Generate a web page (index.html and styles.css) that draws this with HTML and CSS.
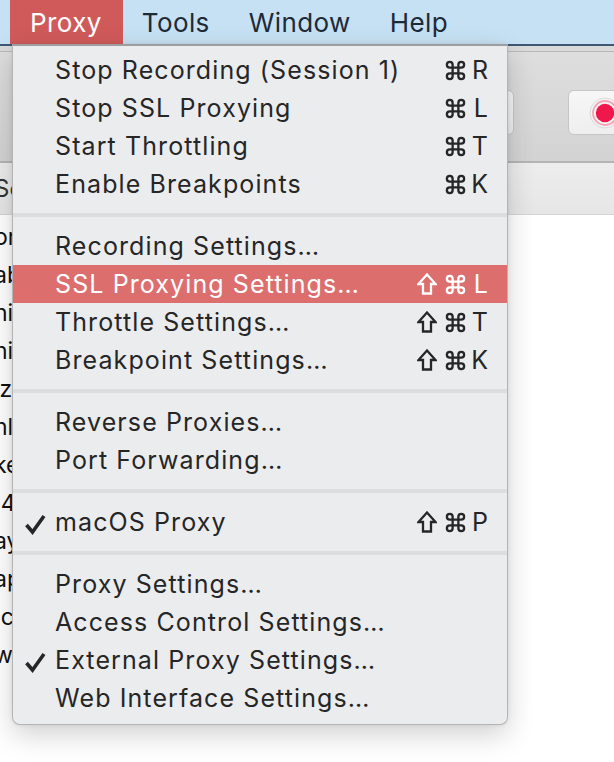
FILE: index.html
```html
<!DOCTYPE html>
<html>
<head>
<meta charset="utf-8">
<link rel="stylesheet" href="styles.css">
</head>
<body>
<div class="screen">
  <div class="menubar">
    <span class="mb-item active">Proxy</span>
    <span class="mb-item">Tools</span>
    <span class="mb-item">Window</span>
    <span class="mb-item">Help</span>
  </div>
  <div class="window">
    <div class="titlebar"></div>
    <div class="toolbar">
      <div class="tb-btn tb-left"></div>
      <div class="tb-btn tb-record">
        <svg width="32" height="32" viewBox="0 0 32 32">
          <circle cx="16" cy="16" r="15" fill="#f4f4f6" stroke="#d9d9de" stroke-width="1"/>
          <circle cx="16" cy="16" r="12" fill="none" stroke="#f7a3b3" stroke-width="1.8"/>
          <circle cx="16" cy="16" r="9.2" fill="#f0174a"/>
        </svg>
      </div>
    </div>
    <div class="header"><span class="frag">Se</span></div>
    <div class="list">
      <div class="row">or</div>
      <div class="row">ab</div>
      <div class="row">ni</div>
      <div class="row">ni</div>
      <div class="row">iz</div>
      <div class="row">nl</div>
      <div class="row">ke</div>
      <div class="row">.4</div>
      <div class="row">ay</div>
      <div class="row">ap</div>
      <div class="row">.c</div>
      <div class="row">wa</div>
    </div>
  </div>

  <div class="menu">
    <div class="item"><span class="label">Stop Recording (Session 1)</span><span class="sc"><span class="cmd"><svg viewBox="0 0 24 24"><path d="M15 6v12a3 3 0 1 0 3-3H6a3 3 0 1 0 3 3V6a3 3 0 1 0-3 3h12a3 3 0 1 0-3-3"/></svg></span><span class="key">R</span></span></div>
    <div class="item"><span class="label">Stop SSL Proxying</span><span class="sc"><span class="cmd"><svg viewBox="0 0 24 24"><path d="M15 6v12a3 3 0 1 0 3-3H6a3 3 0 1 0 3 3V6a3 3 0 1 0-3 3h12a3 3 0 1 0-3-3"/></svg></span><span class="key">L</span></span></div>
    <div class="item"><span class="label">Start Throttling</span><span class="sc"><span class="cmd"><svg viewBox="0 0 24 24"><path d="M15 6v12a3 3 0 1 0 3-3H6a3 3 0 1 0 3 3V6a3 3 0 1 0-3 3h12a3 3 0 1 0-3-3"/></svg></span><span class="key">T</span></span></div>
    <div class="item"><span class="label">Enable Breakpoints</span><span class="sc"><span class="cmd"><svg viewBox="0 0 24 24"><path d="M15 6v12a3 3 0 1 0 3-3H6a3 3 0 1 0 3 3V6a3 3 0 1 0-3 3h12a3 3 0 1 0-3-3"/></svg></span><span class="key">K</span></span></div>
    <div class="sep"></div>
    <div class="item"><span class="label">Recording Settings…</span></div>
    <div class="item selected"><span class="label">SSL Proxying Settings…</span><span class="sc"><span class="shift"><svg viewBox="0 0 20 22"><path d="M10 1.5 L1.5 11 H6 V20.5 H14 V11 H18.5 Z"/></svg></span><span class="cmd"><svg viewBox="0 0 24 24"><path d="M15 6v12a3 3 0 1 0 3-3H6a3 3 0 1 0 3 3V6a3 3 0 1 0-3 3h12a3 3 0 1 0-3-3"/></svg></span><span class="key">L</span></span></div>
    <div class="item"><span class="label">Throttle Settings…</span><span class="sc"><span class="shift"><svg viewBox="0 0 20 22"><path d="M10 1.5 L1.5 11 H6 V20.5 H14 V11 H18.5 Z"/></svg></span><span class="cmd"><svg viewBox="0 0 24 24"><path d="M15 6v12a3 3 0 1 0 3-3H6a3 3 0 1 0 3 3V6a3 3 0 1 0-3 3h12a3 3 0 1 0-3-3"/></svg></span><span class="key">T</span></span></div>
    <div class="item"><span class="label">Breakpoint Settings…</span><span class="sc"><span class="shift"><svg viewBox="0 0 20 22"><path d="M10 1.5 L1.5 11 H6 V20.5 H14 V11 H18.5 Z"/></svg></span><span class="cmd"><svg viewBox="0 0 24 24"><path d="M15 6v12a3 3 0 1 0 3-3H6a3 3 0 1 0 3 3V6a3 3 0 1 0-3 3h12a3 3 0 1 0-3-3"/></svg></span><span class="key">K</span></span></div>
    <div class="sep"></div>
    <div class="item"><span class="label">Reverse Proxies…</span></div>
    <div class="item"><span class="label">Port Forwarding…</span></div>
    <div class="sep"></div>
    <div class="item"><span class="check"><svg viewBox="0 0 22 22"><path d="M2.5 12 L8.5 19 L20 3"/></svg></span><span class="label">macOS Proxy</span><span class="sc"><span class="shift"><svg viewBox="0 0 20 22"><path d="M10 1.5 L1.5 11 H6 V20.5 H14 V11 H18.5 Z"/></svg></span><span class="cmd"><svg viewBox="0 0 24 24"><path d="M15 6v12a3 3 0 1 0 3-3H6a3 3 0 1 0 3 3V6a3 3 0 1 0-3 3h12a3 3 0 1 0-3-3"/></svg></span><span class="key">P</span></span></div>
    <div class="sep"></div>
    <div class="item"><span class="label">Proxy Settings…</span></div>
    <div class="item"><span class="label">Access Control Settings…</span></div>
    <div class="item"><span class="check"><svg viewBox="0 0 22 22"><path d="M2.5 12 L8.5 19 L20 3"/></svg></span><span class="label">External Proxy Settings…</span></div>
    <div class="item"><span class="label">Web Interface Settings…</span></div>
  </div>
</div>
</body>
</html>
```

FILE: styles.css
```css
* { box-sizing: border-box; }
html, body { margin: 0; padding: 0; }
body {
  width: 614px;
  height: 762px;
  overflow: hidden;
  background: #ffffff;
  font-family: "Inter", "Roboto", "Liberation Sans", sans-serif;
}
.screen {
  position: relative;
  width: 614px;
  height: 762px;
  overflow: hidden;
}

/* menubar */
.menubar {
  height: 44px;
  background: #c6e1f3;
  display: flex;
  align-items: stretch;
  padding-left: 10px;
}
.mb-item {
  display: flex;
  align-items: center;
  padding: 0 21px 0 20px;
  font-size: 26px;
  color: #1e2a36;
  letter-spacing: 0.4px;
  flex-shrink: 0;
}
.mb-item + .mb-item {
  padding: 0 20px 0 19px;
}
.mb-item.active {
  background: #d05a5a;
  color: #ffffff;
}

/* background window */
.window {
  border-top: 2px solid #3d5873;
}
.titlebar {
  height: 6px;
  background: #dadada;
  border-bottom: 1px solid #b9b9b9;
}
.toolbar {
  height: 111px;
  background: linear-gradient(#dedede, #d3d3d3);
  border-bottom: 2px solid #b5b5b5;
  display: flex;
  align-items: center;
  padding-top: 12px;
}
.tb-btn {
  height: 45px;
  flex-shrink: 0;
  background: linear-gradient(#f7f7f7, #eeeeee);
  border: 1px solid #c6c6c6;
  border-radius: 6px;
}
.tb-left {
  width: 40px;
  margin-left: 474px;
}
.tb-record {
  width: 70px;
  margin-left: 54px;
  display: flex;
  align-items: center;
  padding-left: 20px;
}
.tb-record svg { width: 32px; height: 32px; }
.header {
  height: 52px;
  background: linear-gradient(#ededed, #e6e6e6);
  border-bottom: 1px solid #d6d6d6;
  display: flex;
  align-items: center;
  overflow: hidden;
}
.frag {
  font-size: 24px;
  color: #333;
  margin-left: -6px;
  white-space: nowrap;
}
.list {
  padding-top: 3px;
  overflow: hidden;
}
.row {
  height: 38px;
  line-height: 38px;
  font-size: 23px;
  color: #111;
  white-space: nowrap;
  margin-left: -6px;
}

/* dropdown menu */
.menu {
  position: absolute;
  left: 12px;
  top: 44px;
  width: 496px;
  height: 681px;
  background: #ebecee;
  border: 1px solid #b4b4b6;
  border-top: 2px solid #9d9ea0;
  border-radius: 0 0 8px 8px;
  box-shadow: 0 10px 28px rgba(0, 0, 0, 0.18), 0 0 4px rgba(0, 0, 0, 0.08);
  padding-top: 5px;
}
.item {
  height: 38px;
  display: flex;
  align-items: center;
  position: relative;
  padding-left: 42px;
  padding-right: 19px;
  font-size: 25px;
  color: #262627;
  letter-spacing: 1.1px;
}
.item.selected {
  background: #dc6e6e;
  color: #ffffff;
}
.label { flex: 1; white-space: nowrap; }
.check {
  position: absolute;
  left: 11px;
  top: 8px;
  width: 22px;
  height: 22px;
}
.check svg {
  width: 22px;
  height: 22px;
  fill: none;
  stroke: currentColor;
  stroke-width: 3.6;
  stroke-linecap: butt;
  stroke-linejoin: miter;
}
.sc {
  display: flex;
  align-items: center;
  letter-spacing: 0;
}
.shift {
  width: 20px;
  height: 22px;
  margin-right: 7px;
  display: flex;
}
.shift svg {
  width: 20px;
  height: 22px;
  fill: none;
  stroke: currentColor;
  stroke-width: 2.3;
  stroke-linejoin: miter;
}
.cmd {
  width: 23px;
  height: 23px;
  display: flex;
}
.cmd svg {
  width: 23px;
  height: 23px;
  fill: none;
  stroke: currentColor;
  stroke-width: 2.4;
}
.key {
  width: 21px;
  text-align: right;
  font-size: 25px;
}
.sep {
  height: 24px;
  display: flex;
  align-items: center;
}
.sep::before {
  content: "";
  display: block;
  width: 100%;
  height: 4px;
  background: #dcdddf;
}
```
